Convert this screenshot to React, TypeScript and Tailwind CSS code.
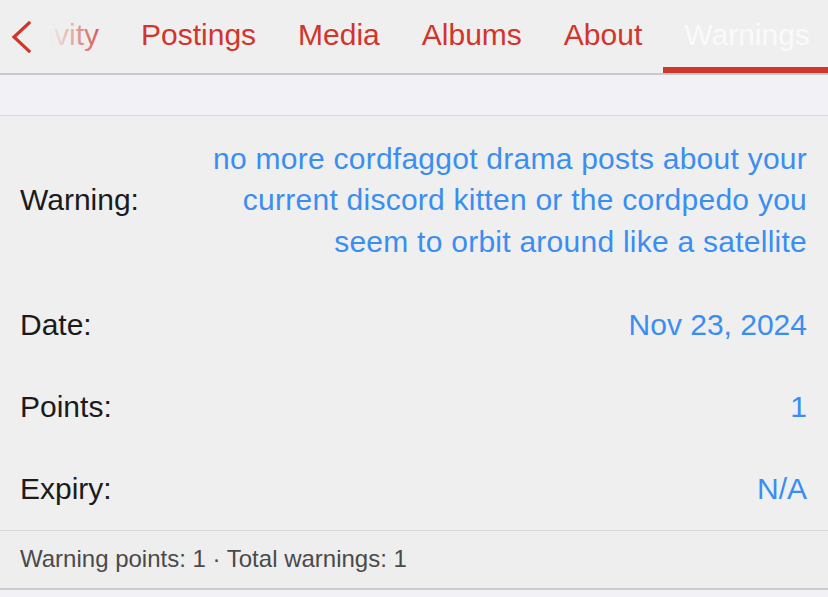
import React from "react";

const tabs = ["Activity", "Postings", "Media", "Albums", "About", "Warnings"];

export default function App() {
  return (
    <div
      className="w-[828px] h-[597px] overflow-hidden bg-[#f2f2f6]"
      style={{ fontFamily: '"Liberation Sans", Arial, sans-serif' }}
    >
      {/* Tab bar */}
      <div className="relative h-[75px] bg-[#efefef] border-b-2 border-[#c9c9cc] overflow-hidden">
        <div className="flex ml-[-17px] h-[73px]">
          {tabs.map((t) => {
            const active = t === "Warnings";
            return (
              <div
                key={t}
                className={`flex-none px-[21px] pt-[14px] h-[73px] text-[30px] leading-[41px] whitespace-nowrap ${
                  active ? "text-[#fafafa] border-b-[6px] border-[#cf372d]" : "text-[#d1352b]"
                }`}
              >
                {t}
              </div>
            );
          })}
        </div>
        <div className="absolute left-0 top-0 h-[73px] w-[120px] bg-[linear-gradient(to_right,#efefef_0px,#efefef_50px,rgba(239,239,239,0)_112px)]" />
        <svg
          className="absolute left-[11px] top-[21px]"
          width="21"
          height="32"
          viewBox="0 0 21 32"
          fill="none"
        >
          <path d="M18 2 L3 16 L18 30" stroke="#d1352b" strokeWidth="3.2" strokeLinecap="square" strokeLinejoin="miter" />
        </svg>
      </div>

      {/* Spacer band */}
      <div className="h-[41px] bg-[#f2f2f6] border-b border-[#dadadc]" />

      {/* Content */}
      <div className="bg-[#efefef] text-[30px]">
        <div className="flex items-center justify-between pl-[20px] pr-[21px] py-[21.5px]">
          <div className="text-[#1b1b1b] leading-[41.5px]">Warning:</div>
          <div className="text-right text-[#3a8ef1] leading-[41.5px] tracking-[0.25px]">
            no more cordfaggot drama posts about your
            <br />
            current discord kitten or the cordpedo you
            <br />
            seem to orbit around like a satellite
          </div>
        </div>
        {[
          ["Date:", "Nov 23, 2024"],
          ["Points:", "1"],
          ["Expiry:", "N/A"],
        ].map(([l, v]) => (
          <div key={l} className="flex items-center justify-between pl-[20px] pr-[21px] py-[20.5px] leading-[41px]">
            <div className="text-[#1b1b1b]">{l}</div>
            <div className="text-[#3a8ef1]">{v}</div>
          </div>
        ))}
      </div>

      {/* Footer */}
      <div className="bg-[#eeeeee] border-t border-[#dadada] border-b-2 border-b-[#cbcbcd] px-[20px] py-[14.5px] text-[24px] leading-[28px] text-[#4a4a4a]">
        Warning points: 1 · Total warnings: 1
      </div>
    </div>
  );
}
